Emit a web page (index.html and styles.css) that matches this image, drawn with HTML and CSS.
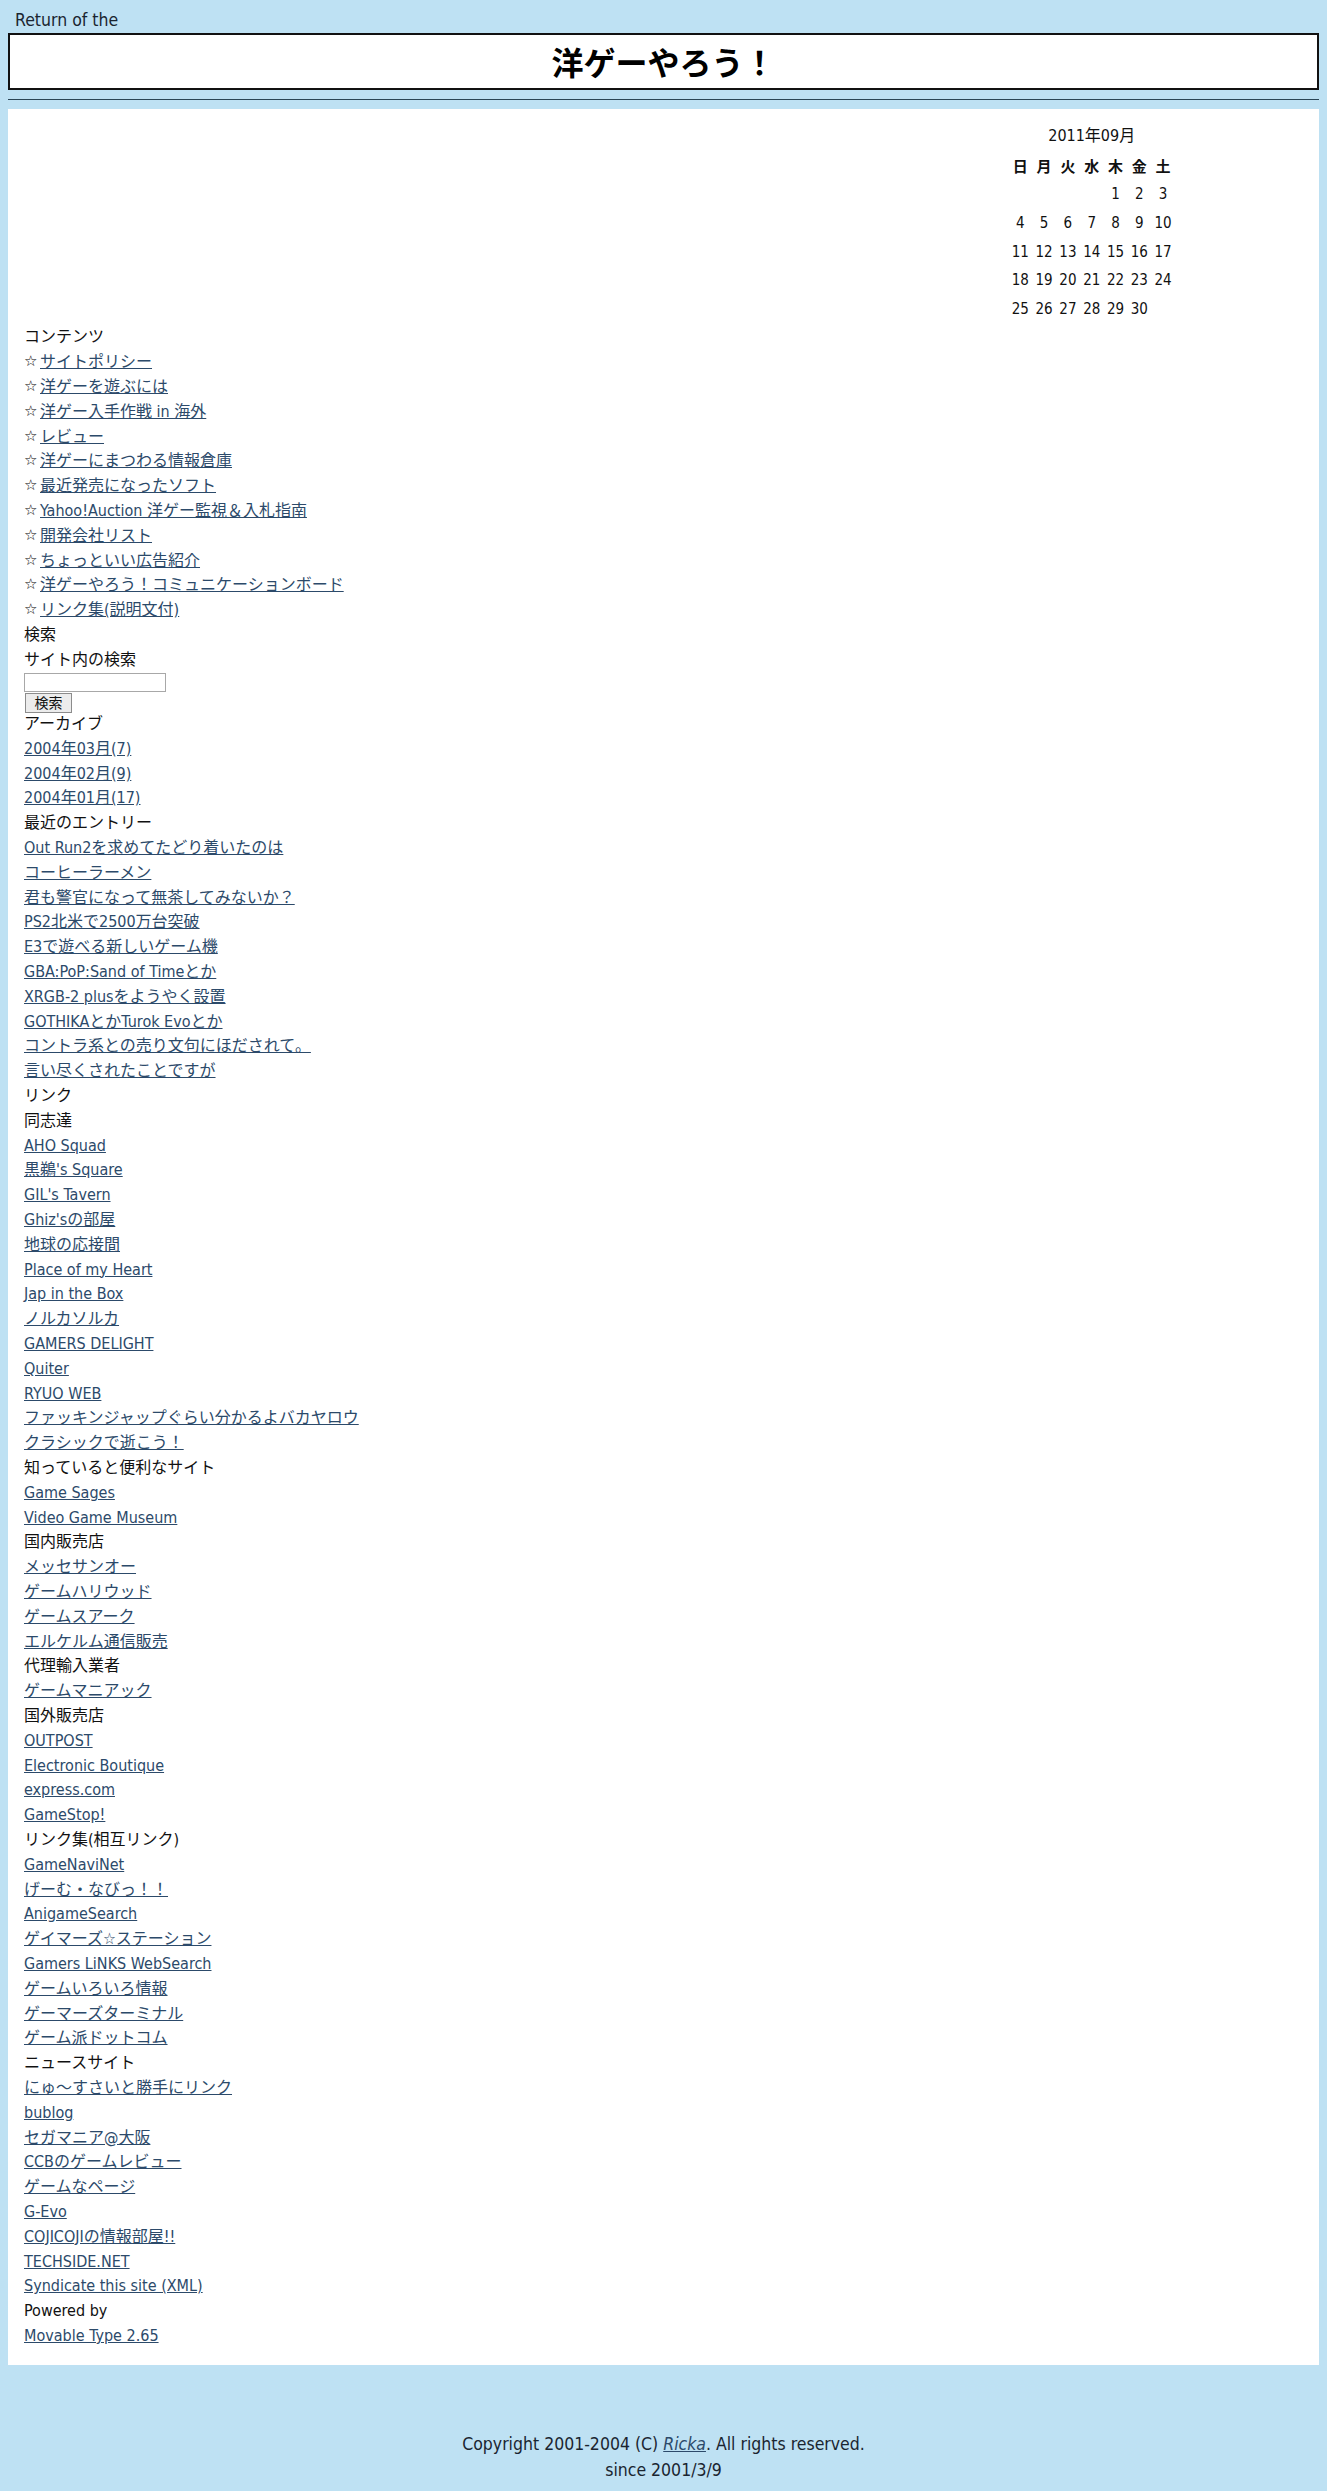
FILE: index.html
```html
<!DOCTYPE html>
<html lang="ja">
<head>
<meta charset="utf-8">
<title>洋ゲーやろう！</title>
<link rel="stylesheet" href="styles.css">
</head>
<body>
<div class="pretitle">Return of the</div>
<div class="banner"><h1>洋ゲーやろう！</h1></div>
<div class="rule"></div>
<div class="content">
  <div class="cal-wrap">
    <table class="cal">
      <caption>2011年09月</caption>
      <thead>
        <tr><th>日</th><th>月</th><th>火</th><th>水</th><th>木</th><th>金</th><th>土</th></tr>
      </thead>
      <tbody>
        <tr><td></td><td></td><td></td><td></td><td>1</td><td>2</td><td>3</td></tr>
        <tr><td>4</td><td>5</td><td>6</td><td>7</td><td>8</td><td>9</td><td>10</td></tr>
        <tr><td>11</td><td>12</td><td>13</td><td>14</td><td>15</td><td>16</td><td>17</td></tr>
        <tr><td>18</td><td>19</td><td>20</td><td>21</td><td>22</td><td>23</td><td>24</td></tr>
        <tr><td>25</td><td>26</td><td>27</td><td>28</td><td>29</td><td>30</td><td></td></tr>
      </tbody>
    </table>
  </div>
  <div class="side">
    <div class="head">コンテンツ</div>
    <div class="row"><span class="star">☆</span><a href="#">サイトポリシー</a></div>
    <div class="row"><span class="star">☆</span><a href="#">洋ゲーを遊ぶには</a></div>
    <div class="row"><span class="star">☆</span><a href="#">洋ゲー入手作戦 in 海外</a></div>
    <div class="row"><span class="star">☆</span><a href="#">レビュー</a></div>
    <div class="row"><span class="star">☆</span><a href="#">洋ゲーにまつわる情報倉庫</a></div>
    <div class="row"><span class="star">☆</span><a href="#">最近発売になったソフト</a></div>
    <div class="row"><span class="star">☆</span><a href="#">Yahoo!Auction 洋ゲー監視＆入札指南</a></div>
    <div class="row"><span class="star">☆</span><a href="#">開発会社リスト</a></div>
    <div class="row"><span class="star">☆</span><a href="#">ちょっといい広告紹介</a></div>
    <div class="row"><span class="star">☆</span><a href="#">洋ゲーやろう！コミュニケーションボード</a></div>
    <div class="row"><span class="star">☆</span><a href="#">リンク集(説明文付)</a></div>
    <div class="head">検索</div>
    <div class="row">サイト内の検索</div>
    <form class="search">
      <input type="text" class="search-box">
      <button type="button" class="search-btn">検索</button>
    </form>
    <div class="head">アーカイブ</div>
    <div class="row"><a href="#">2004年03月(7)</a></div>
    <div class="row"><a href="#">2004年02月(9)</a></div>
    <div class="row"><a href="#">2004年01月(17)</a></div>
    <div class="head">最近のエントリー</div>
    <div class="row"><a href="#">Out Run2を求めてたどり着いたのは</a></div>
    <div class="row"><a href="#">コーヒーラーメン</a></div>
    <div class="row"><a href="#">君も警官になって無茶してみないか？</a></div>
    <div class="row"><a href="#">PS2北米で2500万台突破</a></div>
    <div class="row"><a href="#">E3で遊べる新しいゲーム機</a></div>
    <div class="row"><a href="#">GBA:PoP:Sand of Timeとか</a></div>
    <div class="row"><a href="#">XRGB-2 plusをようやく設置</a></div>
    <div class="row"><a href="#">GOTHIKAとかTurok Evoとか</a></div>
    <div class="row"><a href="#">コントラ系との売り文句にほだされて。</a></div>
    <div class="row"><a href="#">言い尽くされたことですが</a></div>
    <div class="head">リンク</div>
    <div class="head">同志達</div>
    <div class="row"><a href="#">AHO Squad</a></div>
    <div class="row"><a href="#">黒鵜's Square</a></div>
    <div class="row"><a href="#">GIL's Tavern</a></div>
    <div class="row"><a href="#">Ghiz'sの部屋</a></div>
    <div class="row"><a href="#">地球の応接間</a></div>
    <div class="row"><a href="#">Place of my Heart</a></div>
    <div class="row"><a href="#">Jap in the Box</a></div>
    <div class="row"><a href="#">ノルカソルカ</a></div>
    <div class="row"><a href="#">GAMERS DELIGHT</a></div>
    <div class="row"><a href="#">Quiter</a></div>
    <div class="row"><a href="#">RYUO WEB</a></div>
    <div class="row"><a href="#">ファッキンジャップぐらい分かるよバカヤロウ</a></div>
    <div class="row"><a href="#">クラシックで逝こう！</a></div>
    <div class="head">知っていると便利なサイト</div>
    <div class="row"><a href="#">Game Sages</a></div>
    <div class="row"><a href="#">Video Game Museum</a></div>
    <div class="head">国内販売店</div>
    <div class="row"><a href="#">メッセサンオー</a></div>
    <div class="row"><a href="#">ゲームハリウッド</a></div>
    <div class="row"><a href="#">ゲームスアーク</a></div>
    <div class="row"><a href="#">エルケルム通信販売</a></div>
    <div class="head">代理輸入業者</div>
    <div class="row"><a href="#">ゲームマニアック</a></div>
    <div class="head">国外販売店</div>
    <div class="row"><a href="#">OUTPOST</a></div>
    <div class="row"><a href="#">Electronic Boutique</a></div>
    <div class="row"><a href="#">express.com</a></div>
    <div class="row"><a href="#">GameStop!</a></div>
    <div class="head">リンク集(相互リンク)</div>
    <div class="row"><a href="#">GameNaviNet</a></div>
    <div class="row"><a href="#">げーむ・なびっ！！</a></div>
    <div class="row"><a href="#">AnigameSearch</a></div>
    <div class="row"><a href="#">ゲイマーズ☆ステーション</a></div>
    <div class="row"><a href="#">Gamers LiNKS WebSearch</a></div>
    <div class="row"><a href="#">ゲームいろいろ情報</a></div>
    <div class="row"><a href="#">ゲーマーズターミナル</a></div>
    <div class="row"><a href="#">ゲーム派ドットコム</a></div>
    <div class="head">ニュースサイト</div>
    <div class="row"><a href="#">にゅ〜すさいと勝手にリンク</a></div>
    <div class="row"><a href="#">bublog</a></div>
    <div class="row"><a href="#">セガマニア@大阪</a></div>
    <div class="row"><a href="#">CCBのゲームレビュー</a></div>
    <div class="row"><a href="#">ゲームなページ</a></div>
    <div class="row"><a href="#">G-Evo</a></div>
    <div class="row"><a href="#">COJICOJIの情報部屋!!</a></div>
    <div class="row"><a href="#">TECHSIDE.NET</a></div>
    <div class="row"><a href="#">Syndicate this site (XML)</a></div>
    <div class="head">Powered by</div>
    <div class="row"><a href="#">Movable Type 2.65</a></div>
  </div>
</div>
<div class="footer">
  <div>Copyright 2001-2004 (C) <a href="#"><em>Ricka</em></a>. All rights reserved.</div>
  <div>since 2001/3/9</div>
</div>
</body>
</html>
```

FILE: styles.css
```css
body {
  margin: 8px;
  background: #bee1f3;
  color: #111;
  font-family: "DejaVu Sans Condensed", "DejaVu Sans", "Noto Sans CJK JP", sans-serif;
}

a {
  color: #2c4a6a;
  text-decoration: underline;
}

.pretitle {
  font-size: 17.5px;
  line-height: 25px;
  padding-left: 7px;
  color: #1a2530;
}

.banner {
  background: #fff;
  border: 2px solid #111;
  height: 57px;
  box-sizing: border-box;
  text-align: center;
}

.banner h1 {
  margin: 0;
  font-family: "Noto Sans CJK JP", sans-serif;
  font-size: 32px;
  line-height: 53px;
  font-weight: bold;
  color: #000;
}

.rule {
  border-top: 1px solid #2a4555;
  margin-top: 9px;
}

.content {
  background: #fff;
  margin-top: 9px;
  padding: 12px 0 16px 16px;
}

.cal-wrap {
  display: flex;
  justify-content: flex-end;
  margin-right: 144px;
}

.cal {
  border-collapse: collapse;
  border-spacing: 0;
  font-family: "DejaVu Sans Condensed", "Noto Sans CJK JP", sans-serif;
  font-size: 15px;
}

.cal caption {
  font-size: 16px;
  height: 29px;
  line-height: 29px;
}

.cal th,
.cal td {
  width: 23.8px;
  padding: 0;
  text-align: center;
}

.cal th {
  height: 30px;
  font-weight: bold;
}

.cal td {
  height: 28.7px;
}

.side {
  margin-top: 2px;
  font-family: "DejaVu Sans Condensed", "Noto Sans CJK JP", sans-serif;
  font-size: 16px;
  line-height: 24.8px;
}

.head,
.row {
  height: 24.8px;
  white-space: nowrap;
}

.star {
  display: inline-block;
  width: 16px;
  font-family: "DejaVu Sans", sans-serif;
  font-size: 15px;
  line-height: 16px;
  vertical-align: 1px;
  color: #000;
}

.search {
  margin: 0;
  height: 39.5px;
}

.search-box {
  display: block;
  box-sizing: border-box;
  width: 142px;
  height: 19px;
  margin: 0;
  border: 1px solid #a8a8a8;
  padding: 0;
  background: #fff;
}

.search-btn {
  display: block;
  box-sizing: border-box;
  width: 47px;
  height: 20px;
  margin: 1px 0 0 1px;
  padding: 0;
  border: 1px solid #8c8c8c;
  background: #ececec;
  font-family: "Noto Sans CJK JP", sans-serif;
  font-size: 14px;
  line-height: 17px;
  color: #111;
}

.footer {
  margin-top: 66px;
  text-align: center;
  font-size: 17.5px;
  line-height: 26px;
  color: #1a2530;
}
```
